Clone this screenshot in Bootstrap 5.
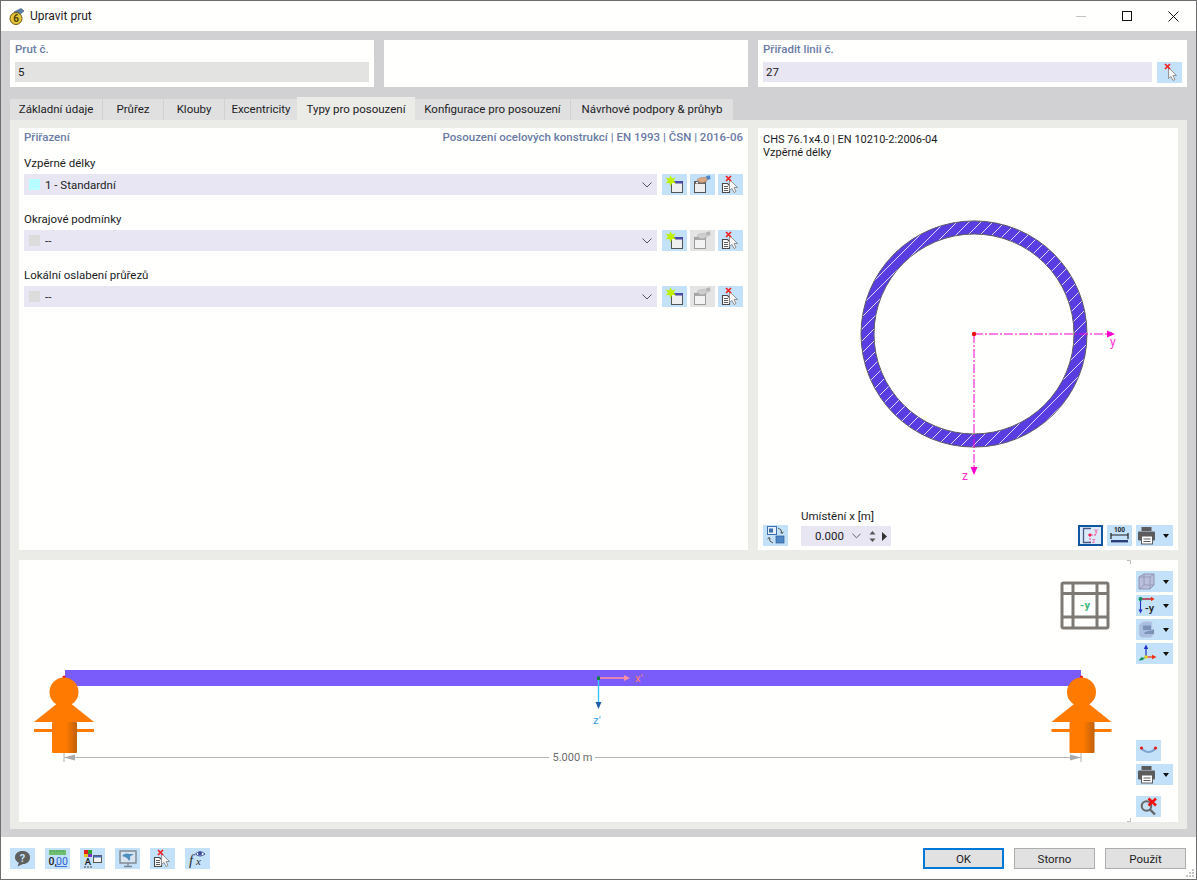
<!DOCTYPE html>
<html lang="cs">
<head>
    <meta charset="utf-8">
    <title>Upravit prut</title>
    <link href="https://cdn.jsdelivr.net/npm/bootstrap@5.3.0/dist/css/bootstrap.min.css" rel="stylesheet">
    <style>
        body { margin: 0; overflow: hidden; background: #fffffd; font-family: Roboto, "Noto Sans", sans-serif; font-size: 11.5px; line-height: 16px; color: #1c1c24; }
        .app-window { position: relative; width: 1197px; height: 880px; border: 1px solid #6e6e6e; display: flex; flex-direction: column; background: #fffffd; }
        .titlebar { height: 30px; flex: none; padding-left: 8px; font-size: 12px; }
        .titlebar > svg { margin-right: 5px; }
        .titlebar .win-btns { margin-left: auto; gap: 0; }
        .win-btn { width: 46px; height: 30px; display: flex; align-items: center; justify-content: center; }
        .dialog-main { flex: 1 1 auto; background: #d1d1d4; padding: 9px 9px 8px; min-height: 0; display: flex; flex-direction: column; }
        .top-row { gap: 10px; height: 47px; flex: none; }
        .top-panel { background: #fffffd; padding: 0 5px; width: 364px; }
        .top-panel.wide { width: 429px; }
        .line-row { gap: 5px; }
        .cap { color: #6a7ba6; font-weight: 500; height: 22px; line-height: 18px; }
        .form-control.field { background: #e3e3e2; border: 0; border-radius: 0; height: 20px; min-height: 0; padding: 0 3px; font-size: 11.5px; line-height: 20px; color: #1c1c24; }
        .form-control.field.edit { background: #e7e6f2; flex: 1 1 auto; width: auto; }
        .nav-tabs.dlg-tabs { margin-top: 10px; height: 23px; flex: none; border: 0; gap: 1px; flex-wrap: nowrap; align-items: flex-end; }
        .dlg-tabs .nav-link { height: 21px; padding: 0; line-height: 21px; text-align: center; background: #e0e0e0; border: 0; border-radius: 0; margin: 0; color: #1c1c24; }
        .dlg-tabs .nav-link.active { height: 23px; line-height: 25px; background: #ebebe8; color: #1c1c24; margin: 0 -1px; }
        .tab-w92 { width: 92px; }
        .tab-w60 { width: 60px; }
        .tab-w72 { width: 72px; }
        .tab-w118 { width: 118px; }
        .tab-w155 { width: 155px; }
        .tab-w162 { width: 162px; }
        .tab-body { background: #ebebe8; padding: 8px 9px 7px; flex: none; }
        .upper { gap: 10px; height: 422px; }
        .left-pane { width: 729px; background: #fffffd; padding: 0 5px; }
        .pane-head { height: 18px; margin-bottom: 9px; }
        .pane-head .cap { height: 18px; line-height: 18px; }
        .assign { margin-bottom: 16px; }
        .assign label { display: block; height: 16px; line-height: 16px; margin-bottom: 3px; }
        .combo { flex: 1 1 auto; height: 21px; background: #e7e6f2; padding: 0 5px 0 5px; gap: 5px; }
        .swatch { width: 11px; height: 11px; background: #dcdcdc; flex: none; }
        .swatch.cyan { background: #b8ffff; }
        .combo .chev { margin-left: auto; }
        .tb { width: 25px; height: 21px; padding: 0; border: 0; border-radius: 0; background: #c3e1f8; display: inline-flex; align-items: center; justify-content: flex-start; flex: none; }
        .tb:hover, .tb:active { background: #c3e1f8; }
        .tb.off, .tb:disabled { background: #e4e4e4; opacity: 1; }
        .tb.wide { width: 37px; }
        .tb.on { background: #dcebf8; border: 2px solid #0f55a0; }
        .tb.dropdown-toggle::after { margin-left: 2px; border-top: 4px solid #111; border-left: 3.5px solid transparent; border-right: 3.5px solid transparent; border-bottom: 0; }
        .tb svg, .spin svg, .combo svg { display: block; flex: none; }
        .tb-group { gap: 3px; margin-left: 5px; }
        .right-pane { width: 420px; background: #fffffd; display: flex; flex-direction: column; }
        .section-info { padding: 5px 5px 0; font-size: 11px; line-height: 13px; height: 30px; flex: none; }
        .section-svg { display: block; width: 420px; height: 347px; flex: none; }
        .section-foot { padding: 0 5px 4px; flex: 1 1 auto; align-items: flex-end; }
        .spot { margin-left: 13px; }
        .spot label { display: block; height: 21px; line-height: 22px; }
        .spin { width: 90px; height: 20px; background: #e7e6f2; padding: 0 4px 0 0; }
        .spin .val { width: 43px; text-align: right; color: #1c1c24; }
        .lower { margin-top: 10px; height: 262px; background: #fffffd; }
        .beam-svg { display: block; width: 1112px; height: 262px; flex: none; }
        .side-tools { padding: 11px 0 5px 5px; }
        .side-tools .stack { gap: 3px; }
        .dialog-foot { height: 42px; flex: none; padding: 0 10px 0 9px; background: #fffffd; }
        .dialog-foot .tools { gap: 10px; }
        .dialog-foot .btns { margin-left: auto; gap: 10px; }
        .btn.act { width: 81px; height: 21px; padding: 0; background: #e1e1e1; border: 1px solid #adadad; border-radius: 0; font-size: 11.5px; line-height: 21px; color: #1c1c24; }
        .btn.act.main { border: 2px solid #0078d7; line-height: 19px; }
        .grip { position: absolute; right: 1px; bottom: 1px; }
        .svg-txt { font-family: Roboto, "Noto Sans", sans-serif; }
    </style>
</head>
<body>
    <svg width="0" height="0" class="position-absolute">
        <defs>
            <g id="cursor-x">
                <path d="M11.5 5.5 L11.5 16.5 L14 14.5 L16 18.5 L18 17.5 L16 13.5 L19.5 13.5 Z" fill="#f6f6f6" stroke="#8a8a8a" stroke-width=".9"/>
                <path d="M8 2 L13 7 M13 2 L8 7" stroke="#f02020" stroke-width="1.7"/>
            </g>
            <g id="doc">
                <path d="M4.5 9.5 H9.5 L11.5 11.5 V18.5 H4.5 Z" fill="#fbfbfb" stroke="#4a4a4a" stroke-width="1.1"/>
                <path d="M6 12.5 H10 M6 14.5 H10 M6 16.5 H10" stroke="#4a4a4a" stroke-width=".9"/>
            </g>
            <symbol id="i-new" viewBox="0 0 25 21">
                <rect x="9.5" y="7.5" width="11" height="11" fill="#efefef" stroke="#555"/>
                <rect x="13" y="7" width="8" height="2.5" fill="#4a4aa8"/>
                <path d="M8.5 1 L10 4.6 L13.6 3.4 L11.6 6.6 L14 9.4 L10.4 8.8 L8.5 12 L7.4 8.8 L3.6 9.4 L6 6.6 L3.8 3.4 L7.4 4.6 Z" fill="#c0f000"/>
            </symbol>
            <symbol id="i-edit" viewBox="0 0 25 21">
                <rect x="4.5" y="7.5" width="11" height="11" fill="#efefef" stroke="#555"/>
                <rect x="4.5" y="7.5" width="11" height="2.5" fill="#6a6a6a"/>
                <rect x="6" y="8" width="2" height="1.4" fill="#fff"/>
                <path d="M7 5.5 Q10 3 14 3.5 L17 3 L17 7 Q13 9.5 10 8.5 Q8 7.5 7 5.5 Z" fill="#d8a784" stroke="#a57c5e" stroke-width=".5"/>
                <path d="M16 2.5 Q18 1 20 1.5 L20.5 5 L17.5 6 Z" fill="#4f86c6"/>
            </symbol>
            <symbol id="i-edit-off" viewBox="0 0 25 21">
                <rect x="4.5" y="7.5" width="11" height="11" fill="#f3f3f3" stroke="#9b9b9b"/>
                <rect x="4.5" y="7.5" width="11" height="2.5" fill="#a8a8a8"/>
                <path d="M7 5.5 Q10 3 14 3.5 L17 3 L17 7 Q13 9.5 10 8.5 Q8 7.5 7 5.5 Z" fill="#cfcfcf" stroke="#aaa" stroke-width=".5"/>
                <path d="M16 2.5 Q18 1 20 1.5 L20.5 5 L17.5 6 Z" fill="#b5b5b5"/>
            </symbol>
            <symbol id="i-del" viewBox="0 0 25 21">
                <use href="#doc"/>
                <use href="#cursor-x"/>
            </symbol>
            <symbol id="i-pick" viewBox="0 0 25 21">
                <use href="#cursor-x"/>
            </symbol>
            <symbol id="i-swap" viewBox="0 0 25 21">
                <rect x="4.5" y="1.5" width="9" height="8" fill="#e6f0fb" stroke="#3d6fb0"/>
                <rect x="6" y="3.5" width="4" height="4" fill="#3d6fb0"/>
                <rect x="13" y="11" width="8" height="7" fill="#4f86c6" stroke="#2f5f99" stroke-width=".7"/>
                <path d="M15 3 Q19 4 19 8.5 M19 8.5 L17.5 6.8 M19 8.5 L20.5 6.8" fill="none" stroke="#555" stroke-width="1"/>
                <path d="M10 18 Q6 17 6 12.5 M6 12.5 L4.5 14.2 M6 12.5 L7.5 14.2" fill="none" stroke="#555" stroke-width="1"/>
            </symbol>
            <symbol id="i-section" viewBox="0 0 21 17">
                <path d="M11 1.5 H3.5 V15.5 H11" fill="none" stroke="#4a5a88" stroke-width="1.3"/>
                <path d="M8 8 H17 M10 8 V15" stroke="#f0509a" stroke-width="1" stroke-dasharray="2 1"/>
                <circle cx="10" cy="8" r="1.4" fill="#f02050"/>
                <text x="14.5" y="6" font-size="7" fill="#f0509a" class="svg-txt">y</text>
                <text x="12" y="15.5" font-size="7" fill="#f0509a" class="svg-txt">z</text>
            </symbol>
            <symbol id="i-dim" viewBox="0 0 25 21">
                <text x="12.5" y="7" font-size="6.5" font-weight="700" text-anchor="middle" fill="#222" class="svg-txt">100</text>
                <path d="M4 8 V14 M21 8 V14 M4 10 H21" stroke="#222" stroke-width="1.2" fill="none"/>
                <rect x="4" y="15" width="17" height="2.4" fill="#2c3f78"/>
            </symbol>
            <symbol id="i-print" viewBox="0 0 25 21">
                <rect x="5.5" y="2" width="10" height="4" fill="#5c5c5c"/>
                <rect x="2" y="6.5" width="17" height="9" rx="1" fill="#5c5c5c"/>
                <rect x="5.5" y="11" width="11" height="8" fill="#fff" stroke="#5c5c5c"/>
                <path d="M7.5 14 H14.5 M7.5 16.5 H14.5" stroke="#5c5c5c"/>
            </symbol>
            <symbol id="i-box" viewBox="0 0 25 21">
                <path d="M3 6 L8 3 H18 V14 L14 18 H3 Z" fill="#b9bfdc" stroke="#8f94ad"/>
                <path d="M3 6 H14 V18 M14 6 L18 3 M8 3 V14 H18 M8 14 L3 18" fill="none" stroke="#8f94ad" stroke-width=".8"/>
            </symbol>
            <symbol id="i-axes-y" viewBox="0 0 25 21">
                <path d="M4.5 4 V16 M4.5 4 H15" stroke="#2030c8" stroke-width="1.1" fill="none"/>
                <path d="M5 4 H15" stroke="#f03010" stroke-width="1.1"/>
                <path d="M15 1.8 L18.5 4 L15 6.2 Z" fill="#f03010"/>
                <path d="M2.5 14.5 L4.5 18.5 L6.5 14.5 Z" fill="#2030c8"/>
                <circle cx="4.5" cy="4" r="2" fill="#109060"/>
                <text x="9" y="17" font-size="11" font-weight="500" fill="#222" class="svg-txt">-y</text>
            </symbol>
            <symbol id="i-view3d" viewBox="0 0 25 21">
                <path d="M3 6 L7 2.5 H16 V10 H18 V15 L15 18.5 H5 L3 16 Z" fill="#a9bfe0" stroke="#c2d0e4" stroke-width=".8"/>
                <path d="M7 6.5 H15 V11 H7 Z M9 13 L18 10.5 V15 H8 Z" fill="#7c92b8"/>
            </symbol>
            <symbol id="i-triad" viewBox="0 0 25 21">
                <path d="M10 14 V5" stroke="#1c2ec8" stroke-width="1.2"/>
                <path d="M7.8 6 L10 1.5 L12.2 6 Z" fill="#1c2ec8"/>
                <path d="M10 14 H17" stroke="#f03010" stroke-width="1.2"/>
                <path d="M16 11.8 L20.5 14 L16 16.2 Z" fill="#f03010"/>
                <path d="M10 14 L5 16.5" stroke="#109060" stroke-width="1.2"/>
                <path d="M6 13.8 L2.5 17.5 L7.5 17 Z" fill="#109060"/>
                <rect x="8.5" y="12.5" width="3" height="3" fill="#e8d820"/>
            </symbol>
            <symbol id="i-curve" viewBox="0 0 25 21">
                <path d="M5 8 Q12.5 16 20 8" fill="none" stroke="#7fa6d0" stroke-width="2"/>
                <circle cx="5.5" cy="8" r="1.6" fill="#e81818"/>
                <circle cx="19.5" cy="8" r="1.6" fill="#e81818"/>
            </symbol>
            <symbol id="i-search-x" viewBox="0 0 25 21">
                <circle cx="10.5" cy="10" r="4.8" fill="none" stroke="#666" stroke-width="2"/>
                <path d="M14 13.5 L19 18.5" stroke="#666" stroke-width="2.4"/>
                <path d="M12.5 2.5 L20 9.5 M20 2.5 L12.5 9.5" stroke="#f01010" stroke-width="2.6"/>
            </symbol>
            <symbol id="i-help" viewBox="0 0 25 21">
                <path d="M12.5 3 C17 3 20 5.5 20 9.5 C20 13.5 17 16 13 16 L7.5 18.5 L8.8 14.8 C6.5 13.6 5 11.8 5 9.5 C5 5.5 8 3 12.5 3 Z" fill="#5f5f5f"/>
                <text x="12.5" y="14" font-size="11" font-weight="700" text-anchor="middle" fill="#c3e1f8" class="svg-txt">?</text>
            </symbol>
            <symbol id="i-num" viewBox="0 0 25 21">
                <rect x="4" y="2" width="17" height="5" fill="#6fbf73"/>
                <path d="M6 2 V4 M9 2 V4 M12 2 V4 M15 2 V4 M18 2 V4" stroke="#3f8f47" stroke-width=".7"/>
                <text x="3.5" y="17" font-size="10.5" font-weight="500" fill="#222" class="svg-txt">0,</text>
                <text x="11" y="17" font-size="10.5" fill="#2f62d8" class="svg-txt">00</text>
                <path d="M11 18.5 H22" stroke="#2f62d8" stroke-width=".9"/>
            </symbol>
            <symbol id="i-palette" viewBox="0 0 25 21">
                <rect x="4" y="2" width="4" height="4" fill="#e02020"/>
                <rect x="8" y="2" width="4" height="4" fill="#30a030"/>
                <rect x="4" y="6" width="4" height="3" fill="#e8c020"/>
                <rect x="8" y="6" width="4" height="3" fill="#8030c0"/>
                <text x="8" y="17" font-size="9.5" font-weight="500" text-anchor="middle" fill="#222" class="svg-txt">A</text>
                <path d="M4 19 H6 M7 19 H9 M10 19 H12" stroke="#444"/>
                <rect x="13.5" y="7.5" width="8" height="7" fill="#f2f2f2" stroke="#555"/>
                <rect x="13.5" y="7.5" width="8" height="2" fill="#4a6ab8"/>
            </symbol>
            <symbol id="i-monitor" viewBox="0 0 25 21">
                <rect x="5" y="3" width="16" height="12" fill="#d7e3ef" stroke="#7c8792" stroke-width="1.4"/>
                <path d="M7 8 Q10 4.5 14 6 L19 6 L15 8.5 Q16 11 14 13 Q13 10 10 9 Z" fill="#4f8fc0"/>
                <path d="M13 15 V18 M9 18.5 H17" stroke="#7c8792" stroke-width="1.4"/>
            </symbol>
            <symbol id="i-fx" viewBox="0 0 25 21">
                <text x="4" y="17" font-size="15" font-style="italic" font-family="Liberation Serif, serif" fill="#333">f</text>
                <text x="11" y="17" font-size="11" font-style="italic" font-family="Liberation Serif, serif" fill="#333">x</text>
                <path d="M10.5 6 Q15 1.5 20 6 Q15 10 10.5 6 Z" fill="#fff" stroke="#3a4aa0"/>
                <circle cx="15" cy="5.6" r="2" fill="#3a4aa0"/>
            </symbol>
            <symbol id="i-chev" viewBox="0 0 10 6">
                <path d="M.5 .5 L5 5 L9.5 .5" fill="none" stroke="#555" stroke-width="1"/>
            </symbol>
            <pattern id="hatch" width="12" height="12" patternUnits="userSpaceOnUse" x="1" y="2">
                <rect width="12" height="12" fill="#5a3de0"/>
                <path d="M-1 13 L13 -1" stroke="#dcd8fa" stroke-width="1"/>
            </pattern>
            <linearGradient id="post" x1="0" x2="1" y1="0" y2="0">
                <stop offset="0" stop-color="#ff7a00"/>
                <stop offset=".55" stop-color="#ff7a00"/>
                <stop offset="1" stop-color="#c06008"/>
            </linearGradient>
            <g id="support">
                <path d="M64 698 L94 722 H34 Z" fill="#ff7a00"/>
                <rect x="34" y="729" width="60" height="3" fill="#ff7a00"/>
                <rect x="52" y="722" width="25" height="31" rx="1" fill="url(#post)"/>
                <circle cx="64" cy="692" r="14.5" fill="#ff7a00"/>
            </g>
        </defs>
    </svg>

    <div class="app-window">
        <div class="titlebar d-flex align-items-center">
            <svg width="16" height="17" viewBox="0 0 16 17">
                <path d="M5 4 L12 .5 L15 3 L9 8 Z" fill="#5b7fa8" stroke="#34506f" stroke-width=".6"/>
                <circle cx="7" cy="10.5" r="6" fill="#e5c53a" stroke="#6c5a14"/>
                <text x="7" y="14" font-size="10" font-weight="700" text-anchor="middle" fill="#4d4308" class="svg-txt">6</text>
            </svg>
            <span>Upravit prut</span>
            <div class="win-btns d-flex">
                <div class="win-btn">
                    <svg width="10" height="10"><path d="M0 5.5 H10" stroke="#c4c4c4"/></svg>
                </div>
                <div class="win-btn">
                    <svg width="10" height="10"><rect x=".5" y=".5" width="9" height="9" fill="none" stroke="#111"/></svg>
                </div>
                <div class="win-btn">
                    <svg width="11" height="11"><path d="M.5 .5 L10.5 10.5 M10.5 .5 L.5 10.5" stroke="#111"/></svg>
                </div>
            </div>
        </div>

        <div class="dialog-main">
            <div class="top-row d-flex">
                <div class="top-panel">
                    <div class="cap">Prut č.</div>
                    <div class="form-control field">5</div>
                </div>
                <div class="top-panel"></div>
                <div class="top-panel wide">
                    <div class="cap">Přiřadit linii č.</div>
                    <div class="line-row d-flex">
                        <div class="form-control field edit">27</div>
                        <button class="btn tb" type="button"><svg width="25" height="21"><use href="#i-pick"/></svg></button>
                    </div>
                </div>
            </div>

            <ul class="nav nav-tabs dlg-tabs">
                <li class="nav-item"><a class="nav-link tab-w92" href="#">Základní údaje</a></li>
                <li class="nav-item"><a class="nav-link tab-w60" href="#">Průřez</a></li>
                <li class="nav-item"><a class="nav-link tab-w60" href="#">Klouby</a></li>
                <li class="nav-item"><a class="nav-link tab-w72" href="#">Excentricity</a></li>
                <li class="nav-item"><a class="nav-link tab-w118 active" href="#">Typy pro posouzení</a></li>
                <li class="nav-item"><a class="nav-link tab-w155" href="#">Konfigurace pro posouzení</a></li>
                <li class="nav-item"><a class="nav-link tab-w162" href="#">Návrhové podpory &amp; průhyb</a></li>
            </ul>

            <div class="tab-body">
                <div class="upper d-flex">
                    <div class="left-pane">
                        <div class="pane-head d-flex justify-content-between">
                            <div class="cap">Přiřazení</div>
                            <div class="cap">Posouzení ocelových konstrukcí | EN 1993 | ČSN | 2016-06</div>
                        </div>

                        <div class="assign">
                            <label>Vzpěrné délky</label>
                            <div class="d-flex">
                                <div class="combo d-flex align-items-center">
                                    <span class="swatch cyan"></span><span>1 - Standardní</span>
                                    <svg class="chev" width="10" height="6"><use href="#i-chev"/></svg>
                                </div>
                                <div class="tb-group d-flex">
                                    <button class="btn tb" type="button"><svg width="25" height="21"><use href="#i-new"/></svg></button>
                                    <button class="btn tb" type="button"><svg width="25" height="21"><use href="#i-edit"/></svg></button>
                                    <button class="btn tb" type="button"><svg width="25" height="21"><use href="#i-del"/></svg></button>
                                </div>
                            </div>
                        </div>

                        <div class="assign">
                            <label>Okrajové podmínky</label>
                            <div class="d-flex">
                                <div class="combo d-flex align-items-center">
                                    <span class="swatch"></span><span>--</span>
                                    <svg class="chev" width="10" height="6"><use href="#i-chev"/></svg>
                                </div>
                                <div class="tb-group d-flex">
                                    <button class="btn tb" type="button"><svg width="25" height="21"><use href="#i-new"/></svg></button>
                                    <button class="btn tb off" type="button" disabled><svg width="25" height="21"><use href="#i-edit-off"/></svg></button>
                                    <button class="btn tb" type="button"><svg width="25" height="21"><use href="#i-del"/></svg></button>
                                </div>
                            </div>
                        </div>

                        <div class="assign">
                            <label>Lokální oslabení průřezů</label>
                            <div class="d-flex">
                                <div class="combo d-flex align-items-center">
                                    <span class="swatch"></span><span>--</span>
                                    <svg class="chev" width="10" height="6"><use href="#i-chev"/></svg>
                                </div>
                                <div class="tb-group d-flex">
                                    <button class="btn tb" type="button"><svg width="25" height="21"><use href="#i-new"/></svg></button>
                                    <button class="btn tb off" type="button" disabled><svg width="25" height="21"><use href="#i-edit-off"/></svg></button>
                                    <button class="btn tb" type="button"><svg width="25" height="21"><use href="#i-del"/></svg></button>
                                </div>
                            </div>
                        </div>
                    </div>

                    <div class="right-pane">
                        <div class="section-info">CHS 76.1x4.0 | EN 10210-2:2006-04<br>Vzpěrné délky</div>
                        <!-- viewBox uses screenshot coordinates -->
                        <svg class="section-svg" viewBox="758 158 420 347">
                            <path fill-rule="evenodd" d="M861 334 a113 113 0 1 0 226 0 a113 113 0 1 0 -226 0 Z M874 334 a100 100 0 1 0 200 0 a100 100 0 1 0 -200 0 Z" fill="url(#hatch)" stroke="#5c5c66" stroke-width="1"/>
                            <path d="M974 334 H1108" stroke="#ff00cc" stroke-width="1" stroke-dasharray="9 2 2 2"/>
                            <path d="M974 334 V468" stroke="#ff00cc" stroke-width="1" stroke-dasharray="9 2 2 2"/>
                            <path d="M1107 330.5 L1115 334 L1107 337.5 Z" fill="#ff00cc"/>
                            <path d="M970.5 467 L974 475 L977.5 467 Z" fill="#ff00cc"/>
                            <circle cx="974" cy="334" r="2.2" fill="#f01010"/>
                            <text x="1110" y="346" font-size="12" fill="#ff2ccf" class="svg-txt">y</text>
                            <text x="962" y="480" font-size="12" fill="#ff2ccf" class="svg-txt">z</text>
                        </svg>
                        <div class="section-foot d-flex">
                            <button class="btn tb" type="button"><svg width="25" height="21"><use href="#i-swap"/></svg></button>
                            <div class="spot">
                                <label>Umístění x [m]</label>
                                <div class="spin d-flex align-items-center">
                                    <span class="val">0.000</span>
                                    <svg class="ms-2" width="9" height="6"><use href="#i-chev"/></svg>
                                    <svg class="ms-2" width="7" height="13" viewBox="0 0 7 13"><path d="M3.5 1 L6.5 4.5 H.5 Z M3.5 12 L6.5 8.5 H.5 Z" fill="#555"/></svg>
                                    <svg class="ms-auto" width="5" height="9" viewBox="0 0 5 9"><path d="M0 0 L5 4.5 L0 9 Z" fill="#333"/></svg>
                                </div>
                            </div>
                            <div class="ms-auto d-flex gap-1">
                                <button class="btn tb on" type="button"><svg width="21" height="17"><use href="#i-section"/></svg></button>
                                <button class="btn tb" type="button"><svg width="25" height="21"><use href="#i-dim"/></svg></button>
                                <button class="btn tb wide dropdown-toggle" type="button"><svg width="25" height="21"><use href="#i-print"/></svg></button>
                            </div>
                        </div>
                    </div>
                </div>

                <div class="lower d-flex">
                    <!-- viewBox uses screenshot coordinates -->
                    <svg class="beam-svg" viewBox="19 560 1112 262">
                        <path d="M1127 560.5 H1130.5 V564 M1127 821.5 H1130.5 V818" fill="none" stroke="#bbb"/>
                        <g fill="none" stroke="#7d7a75" stroke-width="3">
                            <rect x="1062" y="583" width="46" height="45" rx="1.5"/>
                            <path d="M1073 583 V628 M1097 583 V628 M1062 593.5 H1108 M1062 617 H1108"/>
                        </g>
                        <text x="1085" y="609" font-size="11" font-weight="700" text-anchor="middle" fill="#3cb87a" class="svg-txt">-y</text>

                        <rect x="65" y="670" width="1016" height="16" fill="#7a5cfb"/>
                        <circle cx="64" cy="677" r="1.5" fill="#f01010"/>
                        <circle cx="1081.5" cy="677" r="1.5" fill="#f01010"/>
                        <use href="#support"/>
                        <use href="#support" x="1017.5"/>

                        <path d="M64 753 V762 M1081 753 V762" stroke="#b0b0b0"/>
                        <path d="M64 757.5 H549 M595 757.5 H1081" stroke="#b5b5b5"/>
                        <path d="M64 757.5 L75 754.5 V760.5 Z M1081 757.5 L1070 754.5 V760.5 Z" fill="#aaa"/>
                        <text x="572.5" y="761" font-size="11" text-anchor="middle" fill="#6d6d6d" class="svg-txt">5.000 m</text>

                        <path d="M599 678 H626" stroke="#ff8fa0" stroke-width="1.6"/>
                        <path d="M624 675 L630 678 L624 681 Z" fill="#ff8fa0"/>
                        <path d="M598.5 678 V702" stroke="#35c4ff" stroke-width="1.4"/>
                        <path d="M595.5 702 L598.5 709 L601.5 702 Z" fill="#1f5fa8"/>
                        <rect x="597" y="676.5" width="3" height="3.5" fill="#108040"/>
                        <text x="635" y="682" font-size="11.5" fill="#ff7f66" class="svg-txt">x'</text>
                        <text x="593" y="724" font-size="11.5" fill="#3aa0e8" class="svg-txt">z'</text>
                    </svg>
                    <div class="side-tools d-flex flex-column">
                        <div class="stack d-flex flex-column">
                            <button class="btn tb wide dropdown-toggle" type="button"><svg width="25" height="21"><use href="#i-box"/></svg></button>
                            <button class="btn tb wide dropdown-toggle" type="button"><svg width="25" height="21"><use href="#i-axes-y"/></svg></button>
                            <button class="btn tb wide dropdown-toggle" type="button"><svg width="25" height="21"><use href="#i-view3d"/></svg></button>
                            <button class="btn tb wide dropdown-toggle" type="button"><svg width="25" height="21"><use href="#i-triad"/></svg></button>
                        </div>
                        <div class="stack d-flex flex-column mt-auto">
                            <button class="btn tb" type="button"><svg width="25" height="21"><use href="#i-curve"/></svg></button>
                            <button class="btn tb wide dropdown-toggle" type="button"><svg width="25" height="21"><use href="#i-print"/></svg></button>
                            <button class="btn tb mt-2" type="button"><svg width="25" height="21"><use href="#i-search-x"/></svg></button>
                        </div>
                    </div>
                </div>
            </div>
        </div>

        <div class="dialog-foot d-flex align-items-center">
            <div class="tools d-flex">
                <button class="btn tb" type="button"><svg width="25" height="21"><use href="#i-help"/></svg></button>
                <button class="btn tb" type="button"><svg width="25" height="21"><use href="#i-num"/></svg></button>
                <button class="btn tb" type="button"><svg width="25" height="21"><use href="#i-palette"/></svg></button>
                <button class="btn tb" type="button"><svg width="25" height="21"><use href="#i-monitor"/></svg></button>
                <button class="btn tb" type="button"><svg width="25" height="21"><use href="#i-del"/></svg></button>
                <button class="btn tb" type="button"><svg width="25" height="21"><use href="#i-fx"/></svg></button>
            </div>
            <div class="btns d-flex">
                <button class="btn act main" type="button">OK</button>
                <button class="btn act" type="button">Storno</button>
                <button class="btn act" type="button">Použít</button>
            </div>
        </div>
        <svg class="grip" width="10" height="10" viewBox="0 0 10 10"><path d="M7 1h2v2h-2z M4 4h2v2h-2z M7 4h2v2h-2z M1 7h2v2h-2z M4 7h2v2h-2z M7 7h2v2h-2z" fill="#c4c4c4"/></svg>
    </div>

    <script src="https://cdn.jsdelivr.net/npm/bootstrap@5.3.0/dist/js/bootstrap.bundle.min.js"></script>
</body>
</html>
